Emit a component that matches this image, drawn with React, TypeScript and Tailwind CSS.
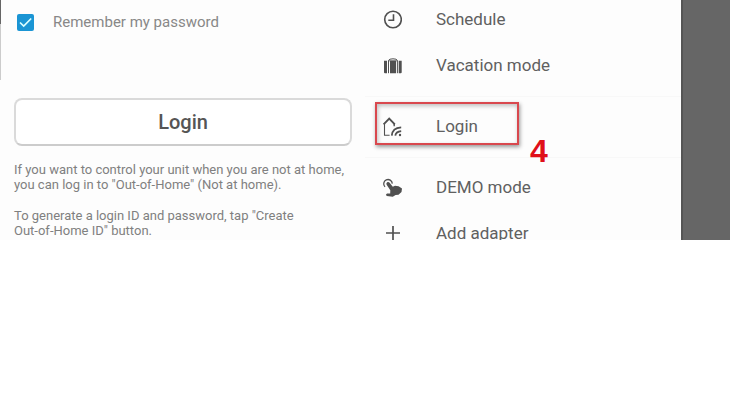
import type { ReactNode } from 'react';

function ClockIcon() {
  return (
    <svg viewBox="0 0 20 20" className="w-5 h-5" fill="none" stroke="currentColor" aria-hidden="true">
      <circle cx="11" cy="9.5" r="8.3" strokeWidth="1.6" />
      <path d="M11.5 4.3V10.2H6.3" strokeWidth="1.6" />
    </svg>
  );
}

function SuitcaseIcon() {
  return (
    <svg viewBox="0 0 20 20" className="w-5 h-5" fill="currentColor" aria-hidden="true">
      <path d="M2 4.7h3v12.5H3a1 1 0 0 1-1-1zM8 4.7h6v12.5H8zM16.7 4.7h3v11.5a1 1 0 0 1-1 1h-2z" />
      <path d="M6.5 17.2V4.4Q7.2 2.8 11 2.8T15.4 4.4V17.2" fill="none" stroke="currentColor" strokeWidth="1" />
      <path d="M6.5 4.8h8.9" stroke="currentColor" strokeWidth="0.8" />
    </svg>
  );
}

function HomeWifiIcon() {
  return (
    <svg viewBox="0 0 20 20" className="w-5 h-5" fill="none" stroke="currentColor" aria-hidden="true">
      <path d="M1.6 7.3L7.2 1.5L12.8 7.3" strokeWidth="1.9" />
      <path d="M2.5 7V18.3H7.6" strokeWidth="1.1" />
      <path d="M12.2 7v2.2" strokeWidth="1.4" />
      <path d="M9.8 18.6Q10.3 10.8 19.2 10.3M13.3 18.6Q13.8 14.6 19.2 14.1" strokeWidth="1.8" />
      <circle cx="18" cy="18" r="1.2" fill="currentColor" stroke="none" />
    </svg>
  );
}

function TouchIcon() {
  return (
    <svg viewBox="0 0 20 20" className="w-5 h-5" fill="none" stroke="currentColor" aria-hidden="true">
      <path d="M3 8.9A4.3 4.3 0 1 1 10.3 5.6" strokeWidth="1.3" />
      <path
        d="M5 4.5C5.8 3.7 6.9 3.9 7.6 4.8L10.8 8.7L13 7.8L16.6 8.2L20 10.5L19.5 13.9L16.5 16.8L13.6 17.1L10.8 18.7L4.8 18.1L3.9 16.7L5 15.6L8.2 15.4L8.3 12.3L4.8 6.9C4.2 6 4.3 5.2 5 4.5Z"
        fill="currentColor"
        stroke="none"
      />
    </svg>
  );
}

function PlusIcon() {
  return (
    <svg viewBox="0 0 20 20" className="w-5 h-5" fill="none" stroke="currentColor" aria-hidden="true">
      <path d="M11 2v14M4 9h14" strokeWidth="1.7" />
    </svg>
  );
}

function MenuItem({ icon, label }: { icon: ReactNode; label: string }) {
  return (
    <li>
      <button type="button" className="flex w-full h-[46px] items-center gap-[34px] pl-[17px] text-left text-[17px] text-[#606060]">
        <span className="text-[#505050]">{icon}</span>
        {label}
      </button>
    </li>
  );
}

export default function App() {
  return (
    <main className="flex h-60 overflow-hidden bg-[#fdfdfd] font-['Roboto',sans-serif]">
      {/* Login form */}
      <section className="flex w-1/2">
        <div className="flex w-px flex-col">
          <div className="h-6 bg-[#666666]" />
          <div className="h-14 bg-[#cccccc]" />
        </div>
        <div className="flex-1 pl-[13px] pr-[13px] pt-3">
          <label className="flex h-5 items-center gap-[19px] pl-[3px] text-[15px] text-[#888888]">
            <span className="relative flex">
              <input type="checkbox" defaultChecked className="peer h-[17px] w-[17px] appearance-none rounded-xs bg-gray-300 checked:bg-[#1b95d4]" />
              <svg viewBox="0 0 17 17" className="pointer-events-none absolute inset-0 hidden peer-checked:block" fill="none" stroke="#dcffff" strokeWidth="1.7" aria-hidden="true">
                <path d="M3 8.5L6.7 12L14.2 4.5" />
              </svg>
            </span>
            Remember my password
          </label>

          <button
            type="button"
            className="mt-[66px] h-12 w-full rounded-lg border-2 border-[#dadada] border-b-[#cccccc] bg-white text-xl font-medium text-[#555555]"
          >
            Login
          </button>

          <div className="mt-4 space-y-4 text-[13px] leading-[15px] text-[#808080]">
            <p>
              If you want to control your unit when you are not at home,
              <br />
              you can log in to "Out-of-Home" (Not at home).
            </p>
            <p>
              To generate a login ID and password, tap "Create
              <br />
              Out-of-Home ID" button.
            </p>
          </div>
        </div>
      </section>

      {/* Side menu */}
      <nav className="flex-1">
        <ul className="-mt-[3px] pb-[7px]">
          <MenuItem icon={<ClockIcon />} label="Schedule" />
          <MenuItem icon={<SuitcaseIcon />} label="Vacation mode" />
        </ul>
        <div className="relative border-y border-[#f8f8f8] py-[7px]">
          <ul>
            <MenuItem icon={<HomeWifiIcon />} label="Login" />
          </ul>
          {/* Step marker */}
          <div className="pointer-events-none absolute left-[10px] top-[5px] h-[43px] w-36 border-2 border-[#d9484e] shadow-[1px_2px_4px_rgba(0,0,0,0.4),inset_1px_2px_4px_rgba(0,0,0,0.25)]" />
          <span className="pointer-events-none absolute left-[165px] top-[38px] font-['Liberation_Sans',sans-serif] text-[32px] leading-8 font-bold text-[#e0101a]">
            4
          </span>
        </div>
        <ul className="pt-[7px]">
          <MenuItem icon={<TouchIcon />} label="DEMO mode" />
          <MenuItem icon={<PlusIcon />} label="Add adapter" />
        </ul>
      </nav>

      <div className="w-[49px] border-l-2 border-[#555555] bg-[#666666]" />
    </main>
  );
}
